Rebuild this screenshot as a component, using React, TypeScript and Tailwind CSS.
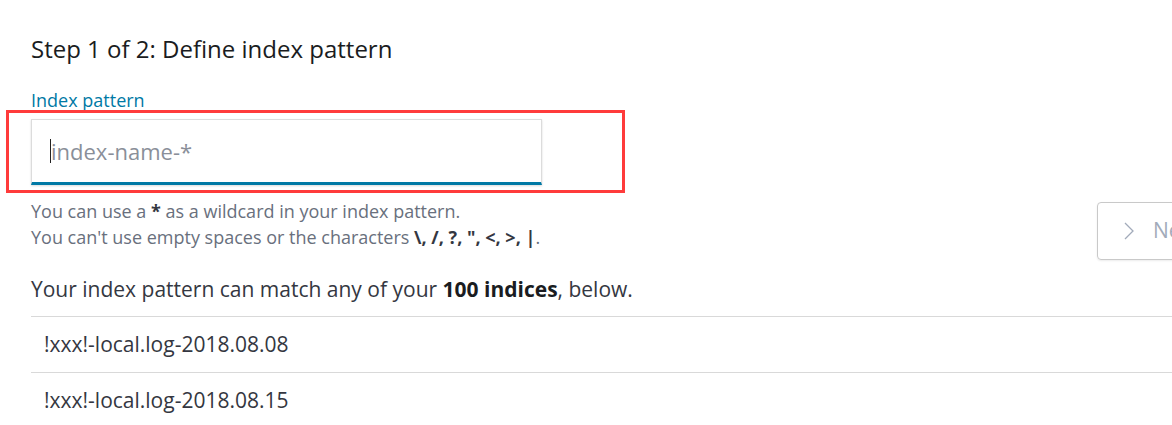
import React from "react";

export default function App() {
  return (
    <div className="w-[1172px] h-[425px] overflow-hidden bg-white" style={{ fontFamily: '"Open Sans", "Noto Sans", sans-serif' }}>
      <div className="w-[1300px] pl-[31px] pt-[34px]">
        <h2 className="text-[24px] leading-[30px] text-[#1a1c21] m-0">Step 1 of 2: Define index pattern</h2>
        <div className="flex items-start mt-[25px]">
          <div className="w-[511px] shrink-0">
            <div className="text-[18px] leading-[22px] text-[#0079a5]">Index pattern</div>
            <div className="relative mt-[8px]">
              <div className="pointer-events-none absolute left-[-25px] top-[-9px] w-[619px] h-[83px] border-[3px] border-[#ff3b3b]" />
              <div className="h-[66px] border border-[#dcdcdc] bg-white shadow-[0_1px_2px_rgba(0,0,0,0.15)] flex items-center pl-[18px] border-b-[3px] border-b-[#0079a5]">
                <span className="w-px h-[24px] bg-[#222]" />
                <span className="text-[22px] text-[#8a8f99] leading-none">index-name-*</span>
              </div>
            </div>
            <div className="mt-[13px] text-[18px] leading-[26px] text-[#69707d] whitespace-nowrap">
              <div>
                You can use a <b className="text-[#343741]">*</b> as a wildcard in your index pattern.
              </div>
              <div>
                You can't use empty spaces or the characters <b className="text-[#343741]">\, /, ?, ", &lt;, &gt;, |</b>.
              </div>
            </div>
          </div>
          <div className="ml-[555px] mt-[113px] w-[150px] h-[58px] border border-[#c9c9c9] rounded-[4px] shadow-[0_1px_2px_rgba(0,0,0,0.08)] flex items-center pl-[26px] text-[#a2abba] whitespace-nowrap shrink-0">
            <svg className="shrink-0" width="10" height="18" viewBox="0 0 10 18" fill="none" stroke="#a2abba" strokeWidth="1.3">
              <path d="M1 1 L9 9 L1 17" />
            </svg>
            <span className="ml-[19px] text-[21px]">Next step</span>
          </div>
        </div>
        <p className="mt-[15px] text-[21px] leading-[28px] text-[#343741]">
          Your index pattern can match any of your <b className="text-[#1a1c21]">100 indices</b>, below.
        </p>
        <div className="mt-[13px] border-t border-[#d9d9d9]">
          <div className="h-[56px] flex items-center pl-[13px] text-[21px] text-[#343741] border-b border-[#d9d9d9]">!xxx!-local.log-2018.08.08</div>
          <div className="h-[56px] flex items-center pl-[13px] text-[21px] text-[#343741] border-b border-[#d9d9d9]">!xxx!-local.log-2018.08.15</div>
        </div>
      </div>
    </div>
  );
}
